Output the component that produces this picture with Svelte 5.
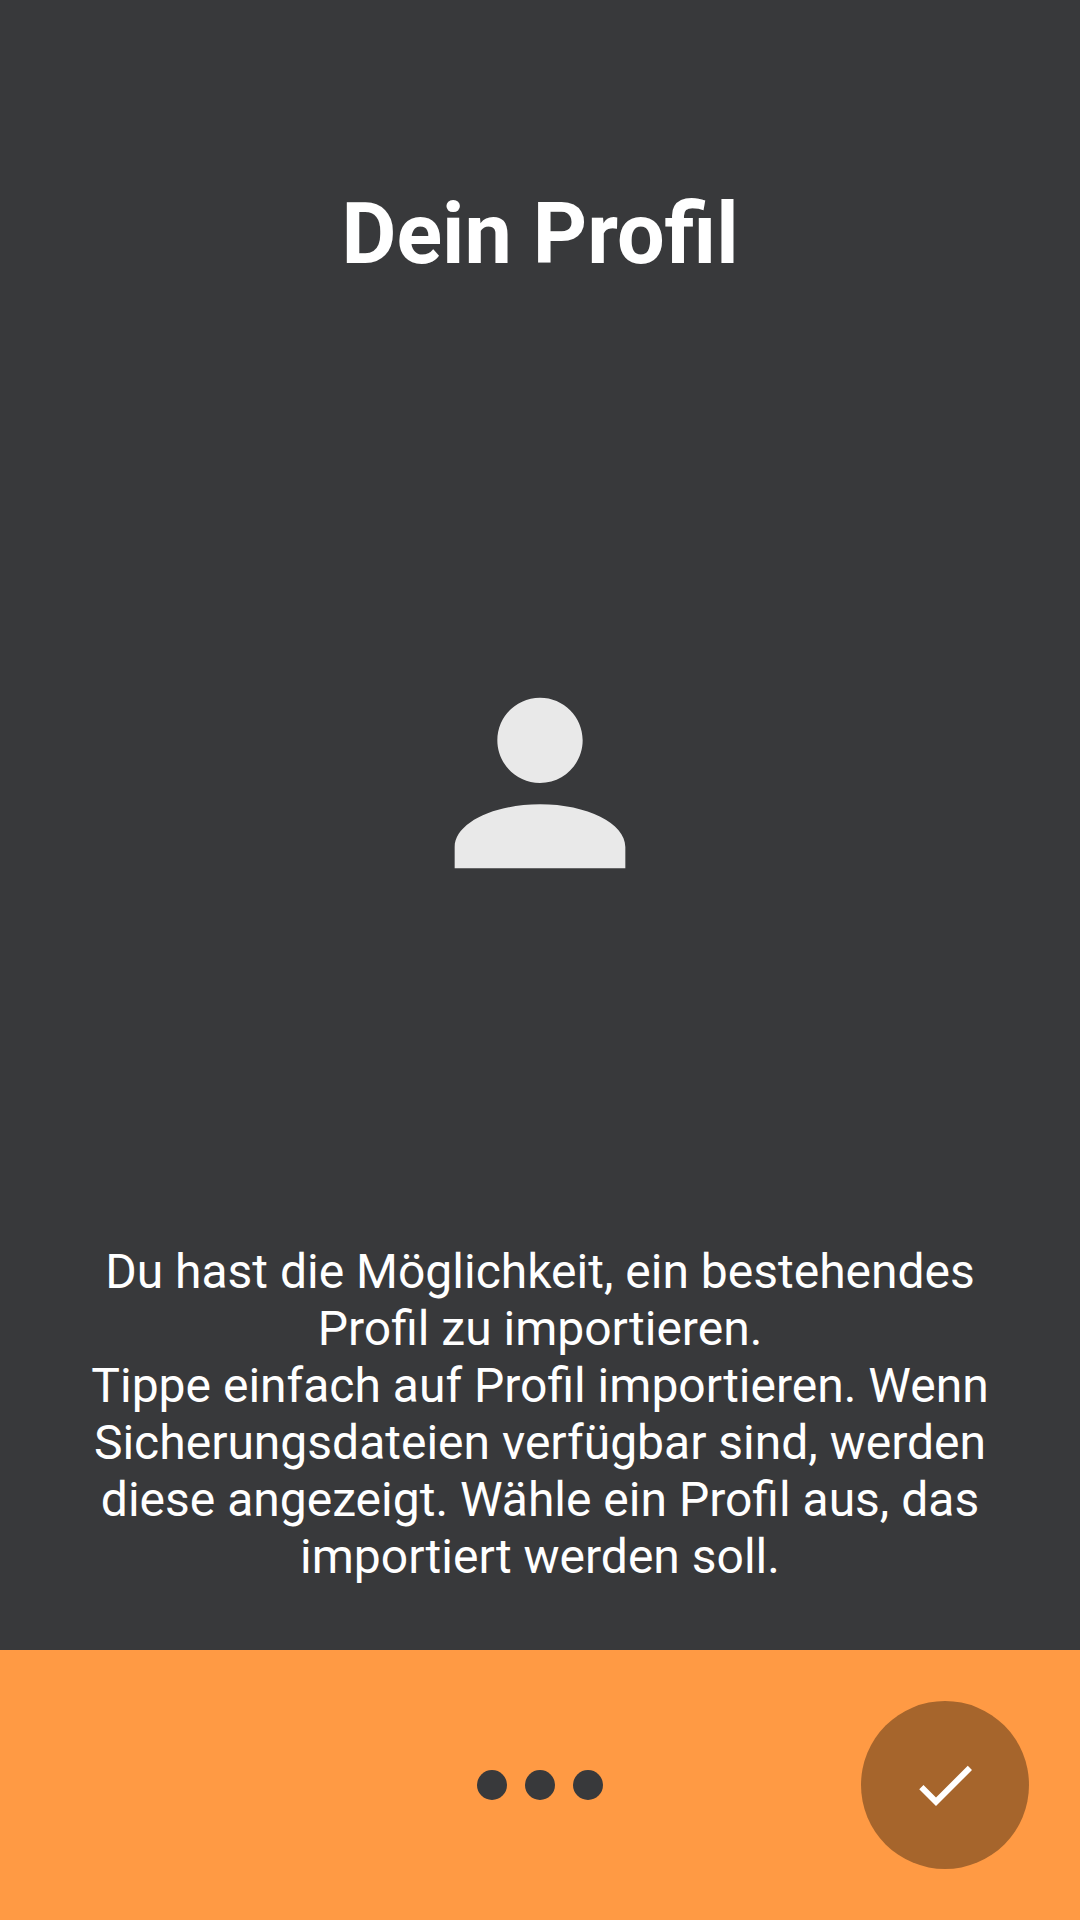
<script>
    const dots = [0, 1, 2];
</script>

<style>
    :global(body) {
        margin: 0;
    }

    .screen {
        width: 1080px;
        height: 1920px;
        display: flex;
        flex-direction: column;
        background-color: #38393b;
        font-family: Roboto, sans-serif;
        color: #fff;
    }

    .content {
        flex: 1;
        display: flex;
        flex-direction: column;
        align-items: center;
        padding: 186px 84px 0;
    }

    h1 {
        margin: 0;
        font-size: 84.5px;
        line-height: 98px;
        font-weight: 700;
    }

    .icon {
        display: block;
        width: 256px;
        height: 256px;
        margin-top: 371px;
        fill: #e9e9e9;
    }

    p {
        margin: 0;
        margin-top: 332px;
        font-size: 48px;
        line-height: 57px;
        text-align: center;
    }

    .footer {
        height: 270px;
        display: flex;
        align-items: center;
        justify-content: center;
        position: relative;
        background-color: #ff9a44;
    }

    .dots {
        display: flex;
        gap: 18px;
    }

    .dot {
        width: 30px;
        height: 30px;
        border-radius: 50%;
        background-color: #38393b;
    }

    .done {
        position: absolute;
        left: 861px;
        top: 51px;
        width: 168px;
        height: 168px;
        padding: 0;
        border: none;
        border-radius: 50%;
        display: flex;
        align-items: center;
        justify-content: center;
        background-color: #a6652c;
    }

    .done svg {
        width: 72px;
        height: 72px;
        fill: #fff;
    }
</style>

<div class="screen">
    <div class="content">
        <h1>Dein Profil</h1>
        <svg class="icon" viewBox="0 0 24 24">
            <path d="M12 12c2.21 0 4-1.79 4-4s-1.79-4-4-4-4 1.79-4 4 1.79 4 4 4zM4 18c0-2.21 3.58-4 8-4s8 1.79 8 4v2H4z" />
        </svg>
        <p>
            Du hast die Möglichkeit, ein bestehendes Profil zu importieren.<br />
            Tippe einfach auf Profil importieren. Wenn Sicherungsdateien verfügbar sind, werden diese angezeigt. Wähle ein Profil aus, das importiert werden soll.
        </p>
    </div>
    <div class="footer">
        <div class="dots">
            {#each dots as dot (dot)}
                <span class="dot"></span>
            {/each}
        </div>
        <button class="done" aria-label="Fertig">
            <svg viewBox="0 0 24 24">
                <path d="M9 16.17 4.83 12l-1.42 1.41L9 19 21 7l-1.41-1.41z" />
            </svg>
        </button>
    </div>
</div>
